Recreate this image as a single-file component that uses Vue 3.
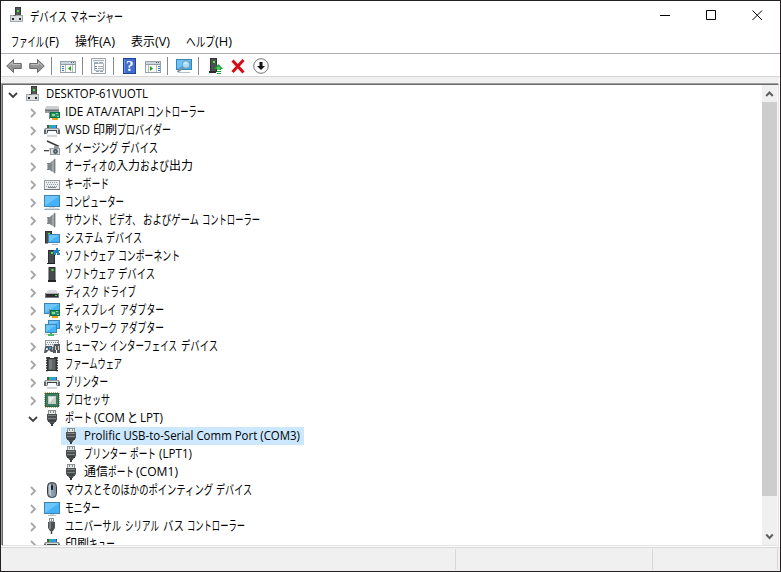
<script setup>
// Each label is a list of runs: [text, start, width], in pixels from the label's left edge.
const k = (o) => ({ level: 1, ...o })
const rows = [
  { level: 0, icon: 'host', open: true, runs: [['DESKTOP-61VUOTL', 0, 102]] },
  k({ icon: 'ide', runs: [['IDE ATA/ATAPI', 0, 79], ['コントローラー', 82, 58]] }),
  k({ icon: 'printer', runs: [['WSD', 0, 25], ['印刷', 28, 24], ['プロバイダー', 52, 54]] }),
  k({ icon: 'imaging', runs: [['イメージング', 0, 53], ['デバイス', 56, 37]] }),
  k({ icon: 'audio', runs: [['オーディオの', 0, 51], ['入力', 51, 24], ['および', 75, 29], ['出力', 104, 24]] }),
  k({ icon: 'keyboard', runs: [['キーボード', 0, 44]] }),
  k({ icon: 'computer', runs: [['コンピューター', 0, 59]] }),
  k({ icon: 'audio', runs: [['サウンド、', 0, 42], ['ビデオ、', 44, 31], ['およびゲーム', 78, 56], ['コントローラー', 137, 58]] }),
  k({ icon: 'system', runs: [['システム', 0, 38], ['デバイス', 41, 36]] }),
  k({ icon: 'component', runs: [['ソフトウェア', 0, 50], ['コンポーネント', 53, 62]] }),
  k({ icon: 'software', runs: [['ソフトウェア', 0, 50], ['デバイス', 53, 37]] }),
  k({ icon: 'disk', runs: [['ディスク', 0, 34], ['ドライブ', 37, 34]] }),
  k({ icon: 'display', runs: [['ディスプレイ', 0, 51], ['アダプター', 55, 44]] }),
  k({ icon: 'network', runs: [['ネットワーク', 0, 52], ['アダプター', 55, 44]] }),
  k({ icon: 'hid', runs: [['ヒューマン', 0, 42], ['インターフェイス', 45, 67], ['デバイス', 116, 37]] }),
  k({ icon: 'firmware', runs: [['ファームウェア', 0, 57]] }),
  k({ icon: 'printer', runs: [['プリンター', 0, 43]] }),
  k({ icon: 'cpu', runs: [['プロセッサ', 0, 45]] }),
  k({ icon: 'port', open: true, runs: [['ポート', 0, 27], ['(COM', 29, 31], ['と', 62, 11], ['LPT)', 75, 23]] }),
  { level: 2, icon: 'port', selected: true, runs: [['Prolific USB-to-Serial Comm Port (COM3)', 0, 216]] },
  { level: 2, icon: 'port', runs: [['プリンター', 0, 43], ['ポート', 46, 26], ['(LPT1)', 75, 33]] },
  { level: 2, icon: 'port', runs: [['通信', 0, 24], ['ポート', 24, 26], ['(COM1)', 52, 42]] },
  k({ icon: 'mouse', runs: [['マウスとそのほかのポインティング', 0, 148], ['デバイス', 151, 36]] }),
  k({ icon: 'monitor', runs: [['モニター', 0, 35]] }),
  k({ icon: 'usb', runs: [['ユニバーサル', 0, 56], ['シリアル', 60, 34], ['バス', 98, 21], ['コントローラー', 122, 58]] }),
  k({ icon: 'printer', runs: [['印刷', 0, 24], ['キュー', 24, 26]] }),
]
const title = [['デバイス', 0, 37], ['マネージャー', 40, 53]]
const menus = [
  { w: 64, runs: [['ファイル', 0, 33], ['(F)', 34, 14]] },
  { w: 56, runs: [['操作', 0, 24], ['(A)', 24, 16]] },
  { w: 56, runs: [['表示', 0, 24], ['(V)', 24, 15]] },
  { w: 56, runs: [['ヘルプ', -1, 29], ['(H)', 28, 17]] },
]
const tools = ['back', 'forward', '|', 'showtree', '|', 'props', '|', 'help', 'action', '|', 'scan', '|', 'update', 'remove', 'disable']

const screen = (x, y, w, h) =>
  `<rect x="${x}" y="${y}" width="${w}" height="${h}" fill="#3f83b0"/><rect x="${x + 1}" y="${y + 1}" width="${w - 2}" height="${h - 2}" fill="#43b2f8"/><path d="M${x + 1} ${y + 1}h${w - 2}L${x + 1} ${y + h - 1}z" fill="#6cc6fc"/>`
const board = '<path d="M6 8h10v6H6z" fill="#0c7045"/><path d="M7 9h8v4H7z" fill="#279465"/><path d="M8 10h3v2H8zM12 9h2v1h-2zM13 12h2v1h-2z" fill="#8ed4ae"/><path d="M5 7h1v8H5z" fill="#7c8886"/><path d="M8 14h6v2H8z" fill="#dda521"/>'
const tower = (x, y, h) =>
  `<path d="M${x} ${y}h7v${h}h-7z" fill="#303234"/><path d="M${x + 1} ${y + 1}h5v${h - 1}h-5z" fill="#484b4c"/><path d="M${x + 3} ${y + 2}h2v2h-2z" fill="#43ed40"/>`
const panel = '<path d="M0 3h16v12H0z" fill="#98a2aa"/><path d="M1 4h14v2H1z" fill="#ccd5dc"/><path d="M1 7h14v7H1z" fill="#f8f9f9"/><path d="M11 4h1v1h-1zM13 4h1v1h-1z" fill="#53616c"/><path d="M0 6h16v1H0z" fill="#929ba3"/>'
const arrow = '<path d="M.7 8 7.5 1.5v4h7.8v5H7.5v4z" fill="#949494" stroke="#6b6b6b"/><path d="m2.5 8 4-3.6v2.2h7.7" fill="none" stroke="#c3c3c3"/>'
const icons = {
  host: '<path d="M5 0h6v9H5z" fill="#393d3f"/><path d="M6 1h4v8H6z" fill="#515656"/><path d="M7 3h2v2H7z" fill="#46e743"/><path d="M0 8h13v7H0z" fill="#a2a7aa"/><path d="M1 9h11v5H1z" fill="#dde0e2"/><path d="M3 8h3v1H3z" fill="#777"/><path d="M2 11h2v2H2zM9 11h2v2H9z" fill="#25292b"/>',
  ide: '<path d="M3 2h11l1 3v4H1V5z" fill="#9a9ea0"/><path d="M3 2h11l1 3H1z" fill="#cdd0d2"/><path d="M1 6h14v1H1z" fill="#6d7173"/>' + board,
  printer: '<path d="M3 3h10v4H3z" fill="#4e5355"/><path d="M5 3h4v3H5z" fill="#35b860"/><path d="M7 3h5v3H7z" fill="#2a9ee6"/><path d="M1 6h14l1 2v4H0V8z" fill="#8f9699"/><path d="M2 7h12v4H2z" fill="#d9dcde"/><path d="M0 8h2v4H0zM14 8h2v4h-2z" fill="#5f6568"/><path d="M3 8h10v3H3z" fill="#3c4143"/><path d="M4 9h8l1 5H3z" fill="#f8fafb"/><path d="M3 14h10" stroke="#adb2b5"/>',
  imaging: '<path d="m3 1 12 5.5" stroke="#35393b" stroke-width="1.4"/><path d="M0 10h5v1.3H0z" fill="#424648"/><path d="m5 8 3 1v2H5z" fill="#c5c9cb"/><path d="M6 8h4V6h5v2h1v7H6z" fill="#959b9d"/><path d="M7 9h8v5H7z" fill="#d9dcde"/><circle cx="11.5" cy="11.5" r="2.4" fill="#40494f"/><circle cx="11.5" cy="11.5" r="1" fill="#84a8bd"/>',
  audio: '<path d="M3 5h3v7H3z" fill="#7e8588"/><path d="M3 6h1v5H3z" fill="#b5babc"/><path d="m6 5 5-4.5v15L6 12z" fill="#a2a9ad"/><path d="m6 5 2-1.8v10.6L6 12z" fill="#82898d"/><path d="M10 1.5 11 .5v15l-1-1z" fill="#747b7f"/><path d="M11.5 1v14" stroke="#c8cccf"/>',
  keyboard: '<path d="M0 4h16v10H0z" fill="#969da1"/><path d="M1 5h14v8H1z" fill="#e9edef"/><path d="M2 6h12M3 8h11M2 10h12" stroke="#949ca0" stroke-dasharray="1 1" transform="translate(0 .5)"/><path d="M4 11h8v1H4z" fill="#848b8f"/><path d="M0 13h16v1H0z" fill="#6e7478"/>',
  computer: screen(0, 1, 16, 12) + '<path d="M5 13h6v1H5z" fill="#d2dce3"/><path d="M1 14h14v1H1z" fill="#d5dce1"/><path d="M0 15h16v1H0z" fill="#a3afb8"/>',
  monitor: screen(0, 2, 16, 12) + '<path d="M6 14h4v1H6z" fill="#c3d0d9"/><path d="M4 15h8v1H4z" fill="#b3c2cd"/>',
  system: tower(1, 1, 12) + screen(4, 4, 12, 9) + '<path d="M8 14h6v1H8z" fill="#a9bfcd"/><path d="M1 13h3v1H1z" fill="#999"/>',
  component: tower(4, 2, 13) + '<path d="M3 15h8v1H3z" fill="#222"/><path d="M10 2h2V0h2v2h2v1h-1v2h1v2h-3V5h-1v2h-2V5H9V3h1z" fill="#2583c6"/>',
  software: tower(4.5, 1, 13) + '<path d="M4 14h8v2H4z" fill="#222526"/>',
  disk: '<path d="M4 6h8l3 4H1z" fill="#dadddd"/><path d="M1 9h14v5H1z" fill="#7a7f81"/><path d="M2 10h12v3H2z" fill="#2b2f31"/><path d="M2 9h12v1H2z" fill="#a7adaf"/><path d="M11 11h2v1h-2z" fill="#43da43"/>',
  display: screen(0, 1, 16, 11) + board,
  network: screen(4, 0, 12, 9) + screen(1, 4, 12, 9) + '<path d="M0 14h14v1H0z" fill="#c9d4ce"/><path d="M6 13h2v1H6zM4 14h6v2H4z" fill="#45b869"/>',
  hid: '<path d="M1 2h14v8H1z" fill="#929a9f"/><path d="M2 3h12v6H2z" fill="#edf0f1"/><path d="M3 4.5h11M2 6.5h11" stroke="#848b91" stroke-dasharray="1 1"/><path d="M2 8h6l1 6H7l-2-2-3 3H0l1-6zM10 6h6v9h-3v-3h-1v3H9v-5z" fill="#54595d"/><path d="M11 8h1v4h-1zM14 8h1v4h-1z" fill="#c5cacb"/><path d="M2 10h2v2H2z" fill="#c4dce9"/><path d="M5 9h2v2H5z" fill="#2e9add"/>',
  firmware: '<path d="M2 2h2M2 4.5h2M2 7h2M2 9.500h2M2 12h2M2 14.500h2M12 2h2M12 4.500h2M12 7h2M12 9.500h2M12 12h2M12 14.500h2" stroke="#303334" stroke-width="1.4"/><path d="M3 1h3v1h4V1h3v14H3z" fill="#303435"/><path d="M4.500 3h7v11h-7z" fill="#5f6465"/><path d="M5 4h3v9H5z" fill="#777c7d"/>',
  cpu: '<path d="M1 .5h14M1 15.5h14M.5 1v14M15.5 1v14" stroke="#c0ac6c" stroke-dasharray="1 1"/><path d="M1 1h14v14H1z" fill="#28634b"/><path d="M2 2h12v12H2z" fill="#3d7d61"/><path d="M4 4h8v8H4z" fill="#c4cfc8"/><path d="M5 5h6L5 11z" fill="#e8ebe9"/>',
  port: '<path d="M4 0h8v4H4z" fill="#8d9192"/><path d="M5 1h6v3H5z" fill="#e6e8e8"/><path d="M6 1h1v2H6zM9 1h1v2H9z" fill="#8b8f90"/><path d="M3 4h10v6l-1 1H4l-1-1z" fill="#4b4f50"/><path d="M4 5h8v1H4zM4 8h8v1H4z" fill="#7e8383"/><path d="M4 10h8v2H4z" fill="#3f4344"/><path d="M5 12h1v1H5zM10 12h1v1h-1z" fill="#85898a"/><path d="M6 12h4v2H6z" fill="#505455"/><path d="M7 13h2v3H7z" fill="#393d3e"/>',
  mouse: '<rect x="3.5" y=".5" width="9" height="15" rx="4" fill="#8f9eac" stroke="#33383c"/><path d="M5 3v9l2 2V2z" fill="#bec8d1"/><path d="M8 1v7" stroke="#38434e"/><rect x="7" y="3" width="2" height="5" rx="1" fill="#17212c"/><path d="M11 4v9" stroke="#718190"/>',
  usb: '<path d="M5 0h5v4H5z" fill="#8c9192"/><path d="M6 1h1v2H6zM8 1h1v2H8z" fill="#fff"/><path d="M4 4h7v6l-2 3H6l-2-3z" fill="#4d5254"/><path d="M5 4h2v7H5z" fill="#7b8183"/><path d="M7.500 12v4" stroke="#404648" stroke-width="1.500"/>',
  back: arrow,
  forward: `<g transform="matrix(-1 0 0 1 16 0)">${arrow}</g>`,
  showtree: panel + '<path d="M5 7h1v7H5zM12 7h1v7h-1z" fill="#b5bcc1"/><path d="M2 8h2v1H2zM2 10h2v1H2zM2 12h2v1H2z" fill="#3978b2"/><path d="m11 8-3 2.5 3 2.500z" fill="#27a018"/>',
  action: panel + '<path d="M3 7h1v7H3zM11 7h1v7h-1z" fill="#b5bcc1"/><path d="M13 8h2v1h-2zM13 10h2v1h-2zM13 12h2v1h-2z" fill="#3978b2"/><path d="m5 8 3 2.5L5 13z" fill="#27a018"/>',
  props: '<path d="M.5.5h14v15H.5z" fill="#f7f8f9" stroke="#9ba4ab"/><path d="M2 2h11v1H2z" fill="#a4aeb6"/><path d="M3.5 5.5h9v7h-9z" fill="#fff" stroke="#b0bac1"/><path d="M3 4h4v2H3zM8 4h4v1H8z" fill="#9aaab7"/><path d="M4 8h2v1H4zM4 10h2v1H4z" fill="#4f7ba4"/><path d="M7 8h5v1H7zM7 10h5v1H7z" fill="#a0aab1"/><path d="M5 13h3v1H5zM9 13h3v1H9z" fill="#97a3ac"/>',
  help: '<path d="M1 0h13v16H1z" fill="#1e429e"/><path d="M3 1h10v14H3z" fill="#436dcc"/><path d="M2 1h1v14H2z" fill="#6f98e4"/><text x="4" y="13" font-family="Liberation Serif,serif" font-size="15" font-weight="bold" fill="#fff">?</text>',
  scan: screen(0, 1, 16, 11) + '<path d="M3 14h11v1H3z" fill="#b1c0c9"/><path d="m7 9.500-5.500 4.500" stroke="#7d919c" stroke-width="2"/><circle cx="10" cy="6.5" r="3.8" fill="#a9def8" stroke="#6d9bb8"/><path d="M8.500 5h2" stroke="#fff"/>',
  update: '<path d="M3 0h7v14H3z" fill="#333638"/><path d="M4 1h5v12H4z" fill="#4c5052"/><path d="M6 3h2v2H6z" fill="#4cf047"/><path d="M2 13h7v2H2z" fill="#292c2d"/><path d="m11.500 6-4.500 5h3v1h4v-1h2zM10 13h4v1h-4zM10 15h4v1h-4z" fill="#18a934"/><path d="M10 9h3v3h-3z" fill="#50ce58"/>',
  remove: '<path d="m2.500 2.500 11 12M13.500 2 2.500 14" stroke="#d50c16" stroke-width="3"/>',
  disable: '<circle cx="8" cy="8" r="7.3" fill="#fcfcfc" stroke="#777" stroke-width="1"/><path d="M6.5 4h3v4H12l-4 4-4-4h2.5z" fill="#111"/>',
}
const script = (s) => (/[\u4e00-\u9fff]/.test(s) ? 'cjk' : /[^\x00-\x7f]/.test(s) ? 'cjk kana' : '')
</script>

<template>
  <div class="window">
    <header class="titlebar">
      <svg class="icon app-icon" viewBox="0 0 16 16" v-html="icons.host" />
      <svg class="label title">
        <text v-for="r in title" :key="r[0]" :x="r[1]" y="14" :textLength="r[2]" lengthAdjust="spacingAndGlyphs" class="cjk kana">{{ r[0] }}</text>
      </svg>
      <div class="controls">
        <svg viewBox="0 0 11 11"><path d="M0 5.5h10" /></svg>
        <svg viewBox="0 0 11 11"><path d="M.5.5h9v9h-9z" /></svg>
        <svg viewBox="0 0 11 11"><path d="m.5.5 9.5 9.5M10 .5.5 10" /></svg>
      </div>
    </header>
    <nav class="menubar">
      <svg v-for="(m, i) in menus" :key="i" class="label" :style="{ width: m.w + 'px' }">
        <text v-for="r in m.runs" :key="r[0]" :x="r[1]" y="13" :textLength="r[2]" lengthAdjust="spacingAndGlyphs" :class="script(r[0])">{{ r[0] }}</text>
      </svg>
    </nav>
    <div class="toolbar">
      <template v-for="(t, i) in tools" :key="i">
        <i v-if="t === '|'" class="sep" />
        <svg v-else class="icon" viewBox="0 0 16 16" v-html="icons[t]" />
      </template>
    </div>
    <main class="panel">
      <ul class="tree">
        <li v-for="(row, i) in rows" :key="i" :class="['row', 'level' + row.level, { selected: row.selected }]">
          <svg v-if="row.level < 2" :class="['chevron', { open: row.open }]" viewBox="0 0 10 10">
            <path :d="row.open ? 'm1 3 4 4 4-4' : 'm3 1 4 4-4 4'" />
          </svg>
          <svg class="icon" viewBox="0 0 16 16" v-html="icons[row.icon]" />
          <span class="caption">
            <svg class="label">
              <text v-for="(r, j) in row.runs" :key="j" :x="r[1]" y="13" :textLength="r[2]" lengthAdjust="spacingAndGlyphs" :class="script(r[0])">{{ r[0] }}</text>
            </svg>
          </span>
        </li>
      </ul>
      <div class="scrollbar">
        <svg viewBox="0 0 15 17"><path d="m4.2 11 3.3-3.5 3.3 3.5" /></svg>
        <div class="thumb" />
        <svg viewBox="0 0 15 17"><path d="m4.2 6.5 3.3 3.5 3.3-3.5" /></svg>
      </div>
    </main>
    <footer class="status"><span /><span /><span /></footer>
  </div>
</template>

<style>
body { margin: 0; overflow: hidden; }
</style>
<style scoped>
.window {
  box-sizing: border-box;
  width: 781px;
  height: 572px;
  display: flex;
  flex-direction: column;
  border: 1px solid #242021;
  background: #fff;
  font-family: "Open Sans", "Noto Sans CJK JP", sans-serif;
  font-size: 12px;
  color: #000;
}
svg { display: block; flex: none; }
.icon { width: 16px; height: 16px; overflow: visible; }
.label { height: 18px; overflow: visible; }
.label text { fill: #000; white-space: pre; }
.label .cjk { font-family: "Noto Sans CJK JP", sans-serif; }
.label .kana { font-size: 13px; }
.titlebar { height: 30px; display: flex; align-items: flex-start; }
.app-icon { margin: 6px 0 0 9px; }
.title { width: 100px; margin: 6px 0 0 4px; }
.controls { display: flex; gap: 35px; margin: 9px 17px 0 auto; }
.controls svg { width: 11px; height: 11px; fill: none; stroke: #000; }
.menubar { height: 22px; display: flex; padding-left: 10px; border-bottom: 1px solid #b0b0b8; }
.menubar .label { margin-top: 2px; }
.toolbar { height: 23px; display: flex; align-items: center; gap: 7px; padding-left: 5px; padding-top: 1px; border-bottom: 1px solid #d7d7d7; box-sizing: border-box; }
.sep { width: 1px; height: 18px; background: #888; margin: 0 1px 0 -1px; }
.panel {
  height: 460px;
  display: flex;
  border: 1px solid #e3e3e3;
  border-top-color: #696969;
  border-left-color: #696969;
  margin: 7px 1px 0;
  box-shadow: -1px -1px 0 #a0a0a0, 0 -7px 0 #f0f0f0;
}
.tree { list-style: none; margin: 0; padding: 0; flex: 1; overflow: hidden; }
.row { height: 18px; display: flex; align-items: center; }
.level0 { padding-left: 5px; }
.level1 { padding-left: 25px; }
.level2 { padding-left: 60px; }
.chevron { width: 10px; height: 10px; fill: none; stroke: #a6a6a6; stroke-width: 1.8; margin-top: 2px; }
.chevron.open { stroke: #404040; margin-top: 1px; }
.level0 .icon { margin-left: 8px; }
.level1 .icon { margin-left: 6px; }
.caption { height: 18px; margin-left: 5px; }
.level0 .caption { margin-left: 4px; }
.level2 .caption { padding-left: 5px; margin-left: 0; }
.selected { width: 301px; box-sizing: border-box; background: linear-gradient(#cce8ff, #cce8ff) 58px 0 no-repeat; }
.scrollbar { width: 15px; margin-right: 1px; background: #f0f0f0; display: flex; flex-direction: column; box-shadow: 1px 0 #f8f8f8; }
.scrollbar svg { width: 15px; height: 17px; fill: none; stroke: #606060; stroke-width: 2; }
.thumb { height: 394px; margin-bottom: auto; background: #cdcdcd; }
.status { flex: 1; margin-top: 1px; border-top: 1px solid #d7d7d7; background: #f0f0f0; display: flex; padding: 1px 2px 1px 0; }
.status span { border-right: 1px solid #d7d7d7; box-sizing: border-box; }
.status span:nth-child(1) { width: 455px; }
.status span:nth-child(2) { width: 197px; }
.status span:nth-child(3) { flex: 1; }
</style>
